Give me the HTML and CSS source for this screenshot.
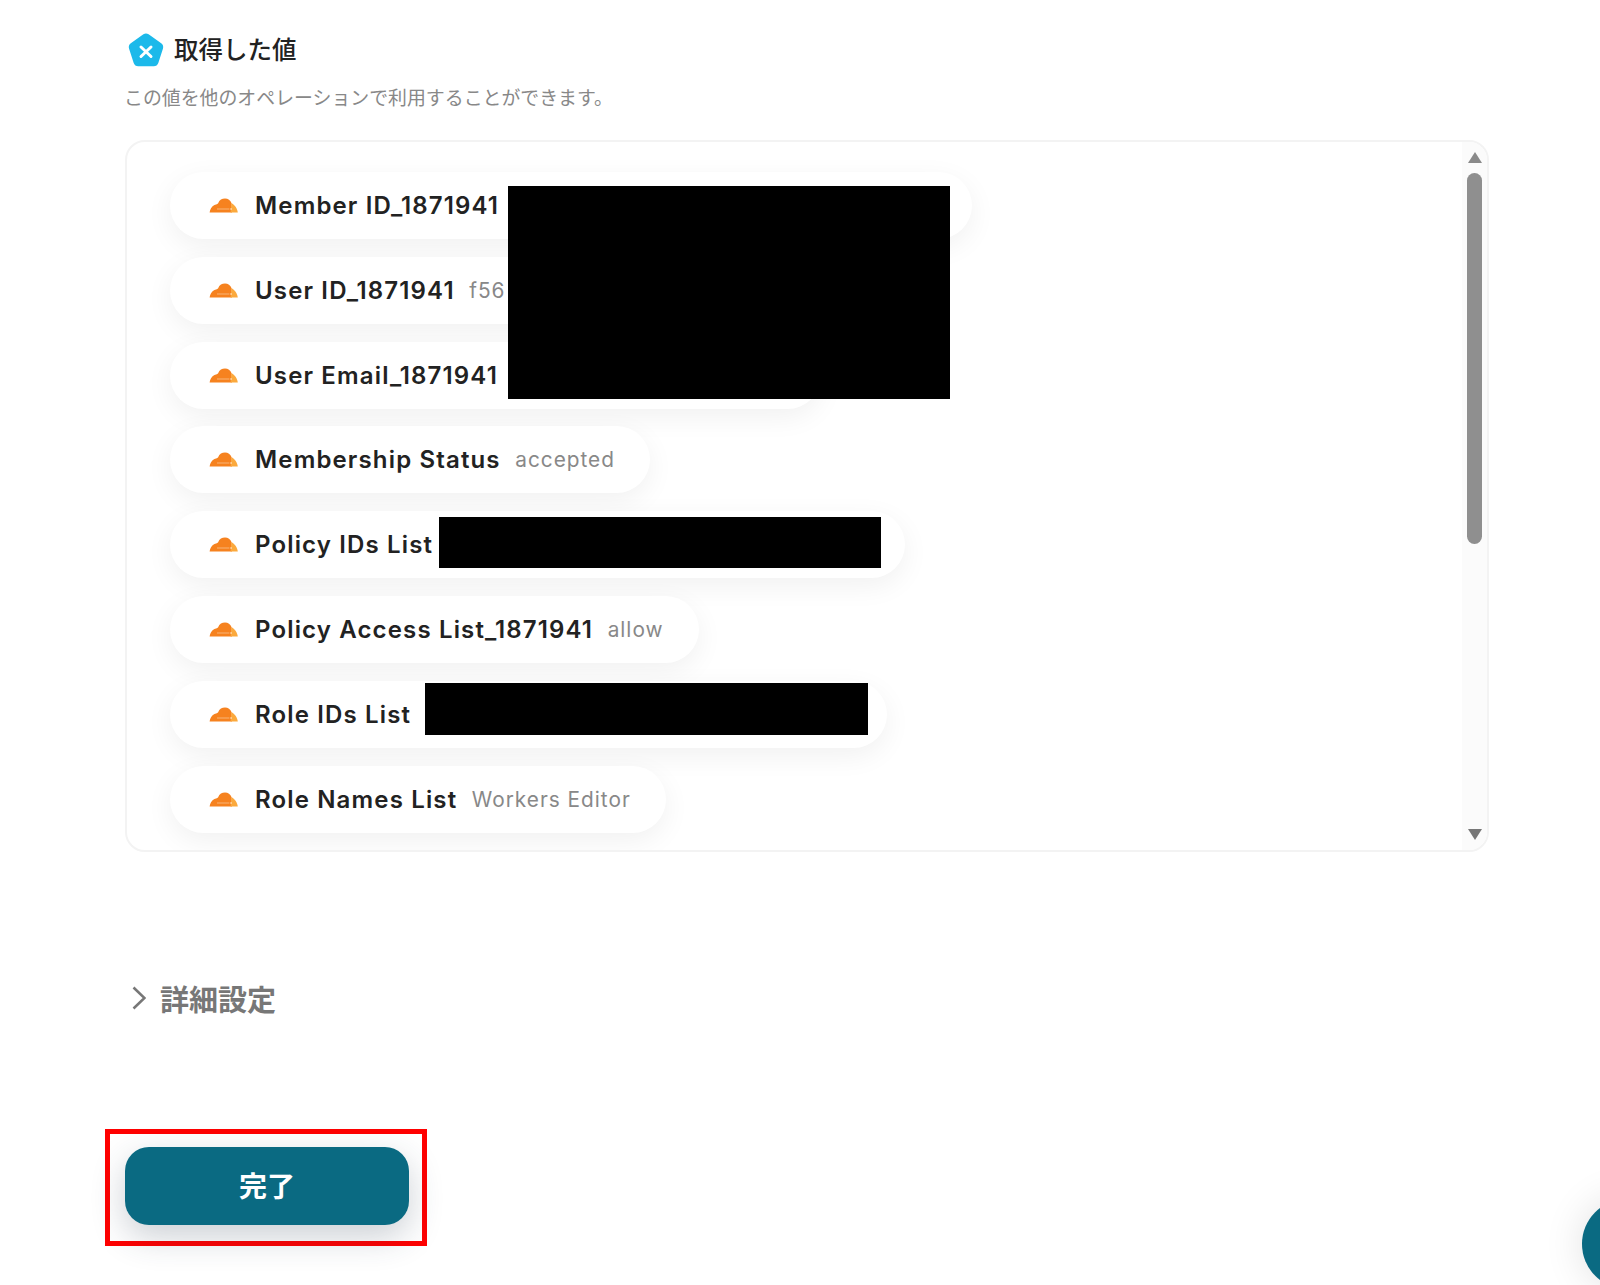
FILE: index.html
```html
<!DOCTYPE html>
<html lang="ja">
<head>
<meta charset="utf-8">
<title>取得した値</title>
<link rel="stylesheet" href="styles.css">
</head>
<body>
<svg class="defs" width="0" height="0" aria-hidden="true">
  <symbol id="cloud" viewBox="0 0 29 15">
    <path fill="#f6821f" d="M0.6 14.6C1 11.5 2.6 8.2 5 7.2C6.5 6.4 8 6.2 9 5.4C10.5 1.8 13 0.5 16 0.5C19 0.5 21.5 2.2 22.6 5.2L23 14.6Z"/>
    <path fill="#fba93d" d="M22.4 5.2C25.6 6.6 28.2 10 28.8 14.6H21.6Z"/>
    <path fill="#fff" fill-opacity="0.8" d="M8 10.8H20.4V11.3H8ZM21.2 10.4H23V11.6H21.2Z"/>
  </symbol>
</svg>
<main class="page">
  <h2 class="heading">
    <svg class="heading-icon" viewBox="0 0 36 34" aria-hidden="true">
      <path fill="#1cb9ea" d="M15.4 1.2C17 0.1 19 0.1 20.6 1.2L33.2 10.2C34.9 11.4 35.6 13.4 35 15.4L30.3 29.9C29.7 31.9 27.9 33.2 25.8 33.2H10.2C8.1 33.2 6.3 31.9 5.7 29.9L1 15.4C0.4 13.4 1.1 11.4 2.8 10.2Z"/>
      <path fill="none" stroke="#fff" stroke-width="3" stroke-linecap="round" d="M13 14L23 23.5M23 14L13 23.5"/>
    </svg>
    <span>取得した値</span>
  </h2>
  <p class="subtitle">この値を他のオペレーションで利用することができます。</p>

  <section class="panel">
    <ul class="list">
      <li class="pill pill-member"><svg class="cloud"><use href="#cloud"/></svg><span class="name">Member ID_1871941</span></li>
      <li class="pill pill-user"><svg class="cloud"><use href="#cloud"/></svg><span class="name">User ID_1871941</span><span class="value">f56</span></li>
      <li class="pill pill-email"><svg class="cloud"><use href="#cloud"/></svg><span class="name">User Email_1871941</span></li>
      <li class="pill"><svg class="cloud"><use href="#cloud"/></svg><span class="name">Membership Status</span><span class="value">accepted</span></li>
      <li class="pill pill-policy"><svg class="cloud"><use href="#cloud"/></svg><span class="name">Policy IDs List</span></li>
      <li class="pill"><svg class="cloud"><use href="#cloud"/></svg><span class="name">Policy Access List_1871941</span><span class="value">allow</span></li>
      <li class="pill pill-role"><svg class="cloud"><use href="#cloud"/></svg><span class="name">Role IDs List</span></li>
      <li class="pill"><svg class="cloud"><use href="#cloud"/></svg><span class="name">Role Names List</span><span class="value">Workers Editor</span></li>
    </ul>
    <div class="scrollbar">
      <span class="arrow arrow-up"></span>
      <span class="thumb"></span>
      <span class="arrow arrow-down"></span>
    </div>
  </section>

  <div class="details">
    <svg class="chevron" viewBox="0 0 14 24" aria-hidden="true"><path fill="none" stroke="#777" stroke-width="2.6" d="M1.5 1.5L12.5 12L1.5 22.5"/></svg>
    <span>詳細設定</span>
  </div>

  <div class="highlight">
    <button class="done" type="button">完了</button>
  </div>

  <div class="redact redact-top"></div>
  <div class="redact redact-policy"></div>
  <div class="redact redact-role"></div>
  <div class="fab"></div>
</main>
</body>
</html>
```
FILE: styles.css
```css
* { box-sizing: border-box; }

html, body {
  margin: 0;
  padding: 0;
  background: #fff;
}

.defs { position: absolute; }

.page {
  position: relative;
  height: 1285px;
  overflow: hidden;
  padding: 33px 0 0 125px;
  font-family: Inter, "Noto Sans CJK JP", sans-serif;
  color: #222;
}

.heading {
  display: flex;
  align-items: center;
  gap: 10px;
  height: 34px;
  margin: 0 0 0 3px;
  font-size: 24.5px;
  font-weight: 500;
  line-height: 34px;
  color: #222;
}

.heading-icon {
  width: 36px;
  height: 34px;
  flex: none;
}

.subtitle {
  margin: 19px 0 0 -1px;
  font-size: 18.9px;
  line-height: 26px;
  color: #888;
}

.panel {
  display: flex;
  width: 1364px;
  height: 712px;
  margin-top: 28px;
  overflow: hidden;
  background: #fff;
  border: 2px solid #f3f3f3;
  border-radius: 20px;
}

.list {
  flex: 1;
  display: flex;
  flex-direction: column;
  align-items: flex-start;
  gap: 17.8px;
  min-width: 0;
  margin: 0;
  padding: 30px 0 0 43px;
  list-style: none;
}

.pill {
  display: flex;
  align-items: center;
  flex: none;
  height: 67px;
  padding: 0 35px 0 39px;
  background: #fff;
  border-radius: 34px;
  box-shadow: 0 8px 28px rgba(0, 0, 0, 0.06);
}

.pill-member { width: 802px; }
.pill-user { width: 760px; }
.pill-email { width: 651px; }
.pill-policy { width: 735px; }
.pill-role { width: 717px; }

.cloud {
  width: 29px;
  height: 15px;
  flex: none;
  margin-right: 17px;
}

.name {
  font-size: 24px;
  font-weight: 600;
  letter-spacing: 1.15px;
  white-space: nowrap;
  color: #222;
}

.value {
  margin-left: 14.5px;
  font-size: 20.8px;
  letter-spacing: 1px;
  white-space: nowrap;
  color: #888;
}

.scrollbar {
  display: flex;
  flex-direction: column;
  align-items: center;
  width: 25px;
  flex: none;
  padding-top: 10px;
  background: #fbfbfb;
}

.arrow {
  width: 0;
  height: 0;
  flex: none;
  border-left: 7px solid transparent;
  border-right: 7px solid transparent;
}

.arrow-up { border-bottom: 11px solid #8a8a8a; }

.arrow-down {
  margin-top: 285px;
  border-top: 11px solid #777;
}

.thumb {
  width: 15px;
  height: 371px;
  flex: none;
  margin-top: 10px;
  background: #8f8f8f;
  border-radius: 8px;
}

.details {
  display: flex;
  align-items: center;
  gap: 14px;
  height: 32px;
  margin: 130px 0 0 7px;
  font-size: 29px;
  font-weight: 700;
  color: #777;
}

.chevron {
  width: 14px;
  height: 24px;
  flex: none;
}

.highlight {
  width: 322px;
  height: 117px;
  margin: 115px 0 0 -20px;
  padding: 13px 0 0 15px;
  border: 5px solid #f00;
}

.done {
  display: block;
  width: 284px;
  height: 78px;
  padding: 0 0 2px;
  border: 0;
  border-radius: 24px;
  background: #0a6a82;
  box-shadow: 0 12px 34px rgba(40, 60, 80, 0.24);
  color: #fff;
  font-family: inherit;
  font-size: 28px;
  font-weight: 700;
}

.redact {
  position: absolute;
  background: #000;
}

.redact-top { left: 508px; top: 186px; width: 442px; height: 213px; }
.redact-policy { left: 439px; top: 517px; width: 442px; height: 51px; }
.redact-role { left: 425px; top: 683px; width: 443px; height: 52px; }

.fab {
  position: absolute;
  left: 1582px;
  top: 1199px;
  width: 90px;
  height: 90px;
  border-radius: 50%;
  background: #0a6a82;
  box-shadow: 0 0 40px rgba(0, 0, 0, 0.12);
}
```
